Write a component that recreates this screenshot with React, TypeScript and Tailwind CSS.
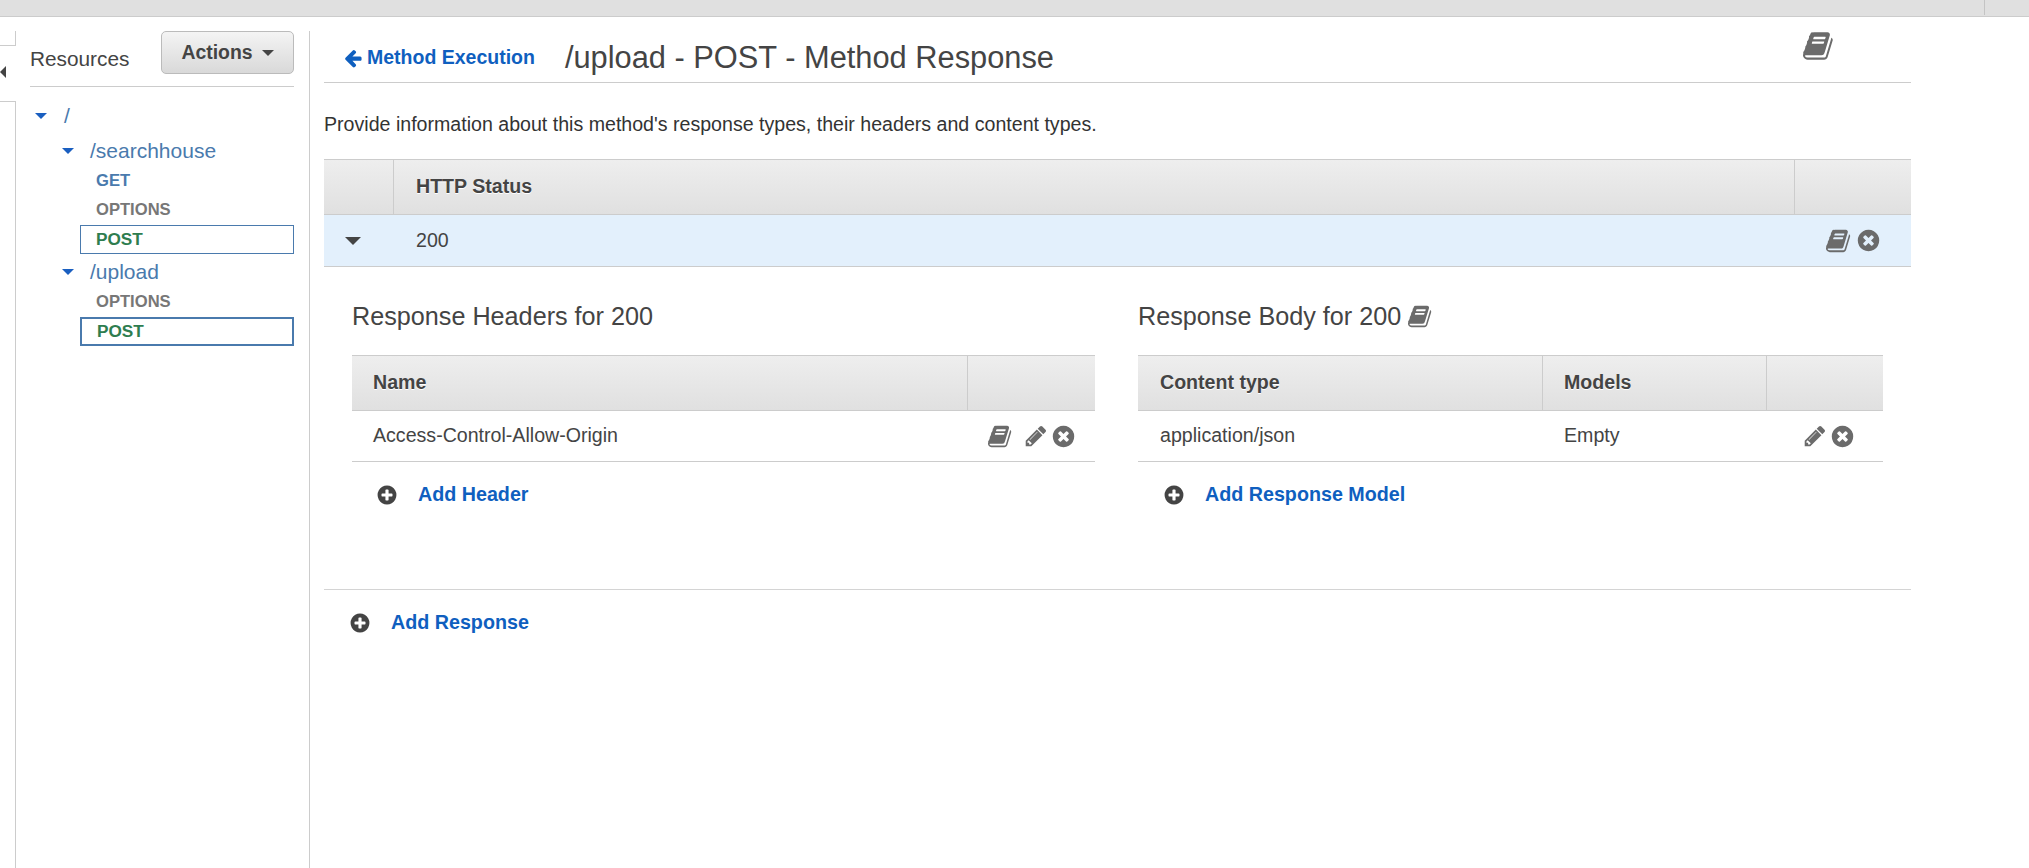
import React from 'react';

const BOOK = 'M1639 478q40 57 18 129l-275 906q-19 64-76.500 107.500t-122.500 43.500h-923q-77 0-148.500-53.500t-99.500-131.500q-24-67-2-127 0-4 3-27t4-37q1-8-3-21.500t-3-19.500q2-11 8-21t16.500-23.500 16.500-23.500q23-38 45-91.500t30-91.500q3-10 .5-30t-.5-28q3-11 17-28t17-23q21-36 42-92t25-90q1-9-2.500-32t.5-28q4-13 22-30.500t22-22.500q19-26 42.500-84.500t27.500-96.500q1-8-3-25.500t-2-26.500q2-8 9-18t18-23 17-21q8-12 16.500-30.500t15-35 16-36 19.500-32 26.500-23.500 36-11.500 47.500 5.500l-1 3q38-9 51-9h761q74 0 114 56t18 130l-274 906q-36 119-71.500 153.500t-128.500 34.500h-869q-27 0-38 15-11 16-1 43 24 70 144 70h923q29 0 56-15.500t35-41.500l300-987q7-22 5-57 38 15 59 43zm-1064 2q-4 13 2 22.500t20 9.500h608q13 0 25.500-9.500t16.500-22.500l21-64q4-13-2-22.500t-20-9.500h-608q-13 0-25.500 9.500t-16.500 22.500zm-83 256q-4 13 2 22.500t20 9.500h608q13 0 25.500-9.500t16.500-22.500l21-64q4-13-2-22.500t-20-9.500h-608q-13 0-25.500 9.500t-16.500 22.500z';
const PENCIL = 'M491 1536l91-91-235-235-91 91v107h128v128h107zm523-928q0-22-22-22-10 0-17 7l-542 542q-7 7-7 17 0 22 22 22 10 0 17-7l542-542q7-7 7-17zm-54-192l416 416-832 832h-416v-416zm683 96q0 53-37 90l-166 166-416-416 166-165q36-38 90-38 53 0 91 38l235 234q37 39 37 91z';
const TIMES = 'M1277 1122q0-26-19-45l-181-181 181-181q19-19 19-45 0-27-19-46l-90-90q-19-19-46-19-26 0-45 19l-181 181-181-181q-19-19-45-19-27 0-46 19l-90 90q-19 19-19 46 0 26 19 45l181 181-181 181q-19 19-19 45 0 27 19 46l90 90q19 19 46 19 26 0 45-19l181-181 181 181q19 19 45 19 27 0 46-19l90-90q19-19 19-46zm387-226q0 209-103 385.500t-279.500 279.500-385.500 103-385.500-103-279.500-279.500-103-385.500 103-385.500 279.500-279.500 385.500-103 385.500 103 279.500 279.500 103 385.500z';
const PLUS = 'M1344 960v-128q0-26-19-45t-45-19h-256v-256q0-26-19-45t-45-19h-128q-26 0-45 19t-19 45v256h-256q-26 0-45 19t-19 45v128q0 26 19 45t45 19h256v256q0 26 19 45t45 19h128q26 0 45-19t19-45v-256h256q26 0 45-19t19-45zm320-64q0 209-103 385.500t-279.500 279.500-385.500 103-385.500-103-279.500-279.500-103-385.500 103-385.500 279.500-279.500 385.500-103 385.500 103 279.500 279.500 103 385.500z';
const ARROW = 'M1664 896v128q0 53-32.500 90.500t-84.500 37.500h-704l293 294q38 36 38 90t-38 90l-75 76q-37 37-90 37-52 0-91-37l-651-652q-37-37-37-90 0-52 37-91l651-650q38-38 91-38 52 0 90 38l75 74q38 38 38 91t-38 91l-293 293h704q52 0 84.500 37.500t32.500 90.500z';

const Fa: React.FC<{ d: string; className: string }> = ({ d, className }) => (
  <svg viewBox="0 0 1792 1792" fill="currentColor" className={`shrink-0 ${className}`}>
    <path d={d} />
  </svg>
);

const Caret: React.FC<{ className: string }> = ({ className }) => (
  <svg viewBox="0 0 12 6" fill="currentColor" className={`shrink-0 ${className}`}>
    <path d="M0 0h12L6 6z" />
  </svg>
);

const headCell = 'bg-gradient-to-b from-[#eeeeee] to-[#e0e0e0] border-t border-b border-[#cccccc] h-[56px] flex items-center font-bold text-[19.6px] text-[#444444] [text-shadow:0_1px_0_#ffffff]';

const TreeFolder: React.FC<{ label: string; pad: string; gap: string }> = ({ label, pad, gap }) => (
  <div className={`flex items-center h-[29px] text-[21px] text-[#4a7aad] ${pad} ${gap}`}>
    <Caret className="w-[12px] h-[6px] text-[#1a5fc0]" />
    <span>{label}</span>
  </div>
);

const Method: React.FC<{ label: string; color: string }> = ({ label, color }) => (
  <div className={`h-[29px] pl-[66px] flex items-center font-bold text-[16.6px] ${color}`}>{label}</div>
);

const AddLink: React.FC<{ label: string; pad: string }> = ({ label, pad }) => (
  <div className={`flex items-center gap-[20px] ${pad}`}>
    <Fa d={PLUS} className="w-[22px] h-[22px] text-[#444444]" />
    <span className="font-bold text-[19.7px] text-[#0f5fbf]">{label}</span>
  </div>
);

const App: React.FC = () => {
  return (
    <div className="h-[868px] overflow-hidden bg-white font-['Liberation_Sans',Arial,sans-serif] text-[#444444]">
      <div className="h-[17px] bg-[#e0e0e0] border-b border-[#cccccc] flex justify-end pr-[44px]">
        <div className="w-px h-[15px] bg-[#c4c4c4]" />
      </div>
      <div className="flex h-[851px]">
        {/* collapsed left rail */}
        <div className="w-[16px] flex flex-col">
          <div className="mt-[14px] h-[15px] border-r border-b border-[#cccccc]" />
          <div className="h-[55px] flex items-center">
            <svg viewBox="0 0 6 12" fill="#444444" className="w-[6px] h-[12px] mt-[-4px]">
              <path d="M6 0v12L0 6z" />
            </svg>
          </div>
          <div className="flex-1 border-r border-t border-[#cccccc]" />
        </div>

        {/* resources tree */}
        <div className="w-[294px] pl-[14px] pr-[15px] mt-[14px] border-r border-[#cccccc]">
          <div className="h-[56px] border-b border-[#cccccc] flex items-start justify-between">
            <span className="text-[20.8px] mt-[16px] leading-[24px]">Resources</span>
            <div className="w-[133px] h-[43px] rounded-[5px] border border-[#bbbbbb] bg-gradient-to-b from-[#f4f4f4] to-[#d9d9d9] flex items-center justify-center gap-[9px]">
              <span className="font-bold text-[19.4px] text-[#444444]">Actions</span>
              <Caret className="w-[12px] h-[6px] text-[#444444]" />
            </div>
          </div>
          <div className="pt-[14px]">
            <TreeFolder label="/" pad="pl-[5px]" gap="gap-[17px]" />
            <div className="h-[6px]" />
            <TreeFolder label="/searchhouse" pad="pl-[32px]" gap="gap-[16px]" />
            <div className="h-[2px]" />
            <Method label="GET" color="text-[#4a7aad]" />
            <Method label="OPTIONS" color="text-[#777777]" />
            <div className="ml-[50px] h-[29px] border border-[#4a7aad] pl-[15px] flex items-center font-bold text-[17.2px] text-[#2e7d4f]">POST</div>
            <div className="h-[3px]" />
            <TreeFolder label="/upload" pad="pl-[32px]" gap="gap-[16px]" />
            <div className="h-[2px]" />
            <Method label="OPTIONS" color="text-[#777777]" />
            <div className="ml-[50px] h-[29px] border-2 border-[#4a7aad] pl-[15px] flex items-center font-bold text-[17.2px] text-[#2e7d4f]">POST</div>
          </div>
        </div>

        {/* method response */}
        <div className="w-[1587px] ml-[14px] mt-[14px]">
          <div className="relative h-[52px] border-b border-[#cccccc] flex items-center pl-[19px]">
            <Fa d={ARROW} className="w-[20px] h-[20px] text-[#0f5fbf] mr-[4px] mt-[2px]" />
            <span className="font-bold text-[19.5px] text-[#0f5fbf] mt-[2px]">Method Execution</span>
            <h1 className="text-[30.8px] text-[#444444] ml-[30px] mt-[2px] leading-[40px]">/upload - POST - Method Response</h1>
            <Fa d={BOOK} className="absolute left-[1479px] top-[-1px] w-[32px] h-[32px] text-[#6b6b6b]" />
          </div>

          <p className="text-[19.6px] text-[#333333] mt-[29px] leading-[24px]">Provide information about this method's response types, their headers and content types.</p>

          <div className="mt-[23px] flex">
            <div className={`${headCell} w-[70px] border-r`} />
            <div className={`${headCell} flex-1 pl-[22px] border-r`}>HTTP Status</div>
            <div className={`${headCell} w-[116px]`} />
          </div>
          <div className="h-[52px] bg-[#e3f0fc] border-b border-[#cccccc] flex items-center text-[19.6px]">
            <div className="w-[70px] pl-[21px]">
              <Caret className="w-[16px] h-[8px] text-[#444444]" />
            </div>
            <div className="flex-1 pl-[22px]">200</div>
            <div className="flex items-center gap-[4px] pr-[30px]">
              <Fa d={BOOK} className="w-[26px] h-[26px] text-[#6b6b6b]" />
              <Fa d={TIMES} className="w-[25px] h-[25px] text-[#6b6b6b]" />
            </div>
          </div>

          <div className="flex gap-[43px] pl-[28px] pr-[28px] h-[323px] border-b border-[#d4d4d4] pt-[35px]">
            <div className="w-[743px]">
              <h3 className="text-[25.2px] leading-[28px] text-[#444444]">Response Headers for 200</h3>
              <div className="mt-[25px] flex">
                <div className={`${headCell} flex-1 pl-[21px] border-r`}>Name</div>
                <div className={`${headCell} w-[127px]`} />
              </div>
              <div className="h-[51px] border-b border-[#cccccc] flex items-center justify-between pl-[21px] pr-[19px] text-[19.6px]">
                <span>Access-Control-Allow-Origin</span>
                <div className="flex items-center text-[#6b6b6b]">
                  <Fa d={BOOK} className="w-[25px] h-[25px]" />
                  <Fa d={PENCIL} className="w-[24px] h-[24px] ml-[11px] mr-[3px]" />
                  <Fa d={TIMES} className="w-[25px] h-[25px]" />
                </div>
              </div>
              <AddLink label="Add Header" pad="pl-[24px] pt-[18px]" />
            </div>
            <div className="w-[745px]">
              <h3 className="text-[25.2px] leading-[28px] text-[#444444] flex items-center gap-[7px]">
                Response Body for 200
                <Fa d={BOOK} className="w-[25px] h-[25px] text-[#6b6b6b]" />
              </h3>
              <div className="mt-[25px] flex">
                <div className={`${headCell} w-[405px] pl-[22px] border-r`}>Content type</div>
                <div className={`${headCell} w-[224px] pl-[21px] border-r`}>Models</div>
                <div className={`${headCell} flex-1`} />
              </div>
              <div className="h-[51px] border-b border-[#cccccc] flex items-center text-[19.6px]">
                <div className="w-[405px] pl-[22px]">application/json</div>
                <div className="w-[224px] pl-[21px]">Empty</div>
                <div className="flex-1 flex items-center justify-end gap-[3px] pr-[28px] text-[#6b6b6b]">
                  <Fa d={PENCIL} className="w-[24px] h-[24px]" />
                  <Fa d={TIMES} className="w-[25px] h-[25px]" />
                </div>
              </div>
              <AddLink label="Add Response Model" pad="pl-[25px] pt-[18px]" />
            </div>
          </div>
          <AddLink label="Add Response" pad="pl-[25px] pt-[18px]" />
        </div>
      </div>
    </div>
  );
};

export default App;
